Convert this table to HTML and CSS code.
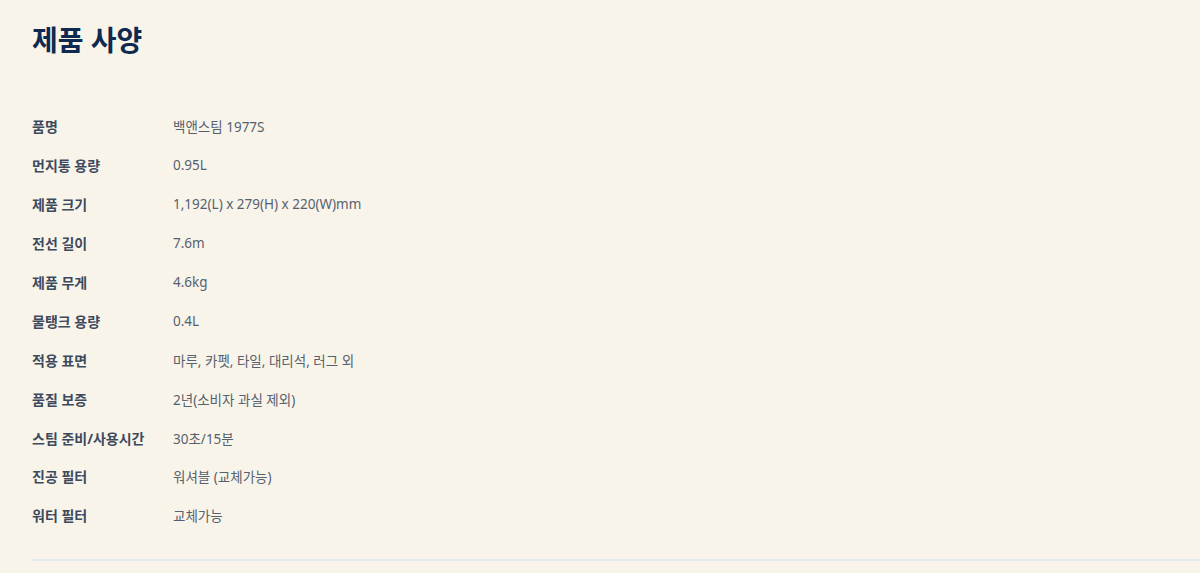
FILE: index.html
```html
<!DOCTYPE html>
<html lang="ko">
<head>
    <meta charset="UTF-8">
    <meta name="viewport" content="width=device-width, initial-scale=1.0">
    <title>제품 사양</title>
    <link rel="stylesheet" href="styles.css">
</head>
<body>

    <section class="spec-section">
        <h1>제품 사양</h1>

        <dl class="spec-list">
            <div class="spec-row"><dt>품명</dt><dd>백앤스팀 1977S</dd></div>
            <div class="spec-row"><dt>먼지통 용량</dt><dd>0.95L</dd></div>
            <div class="spec-row"><dt>제품 크기</dt><dd>1,192(L) x 279(H) x 220(W)mm</dd></div>
            <div class="spec-row"><dt>전선 길이</dt><dd>7.6m</dd></div>
            <div class="spec-row"><dt>제품 무게</dt><dd>4.6kg</dd></div>
            <div class="spec-row"><dt>물탱크 용량</dt><dd>0.4L</dd></div>
            <div class="spec-row"><dt>적용 표면</dt><dd>마루, 카펫, 타일, 대리석, 러그 외</dd></div>
            <div class="spec-row"><dt>품질 보증</dt><dd>2년(소비자 과실 제외)</dd></div>
            <div class="spec-row"><dt>스팀 준비/사용시간</dt><dd>30초/15분</dd></div>
            <div class="spec-row"><dt>진공 필터</dt><dd>워셔블 (교체가능)</dd></div>
            <div class="spec-row"><dt>워터 필터</dt><dd>교체가능</dd></div>
        </dl>

        <hr class="divider">
    </section>

</body>
</html>
```

FILE: styles.css
```css
body {
    font-family: "Noto Sans", "Noto Sans CJK KR", sans-serif;
    background: #f9f4ea;
    margin: 0;
    padding: 0;
}

.spec-section {
    padding: 21px 0 0 32px;
}

h1 {
    font-size: 28px;
    line-height: 38px;
    font-weight: 700;
    color: #0f2a50;
    margin: 0 0 48px;
}

.spec-list {
    margin: 0;
}

.spec-row {
    display: flex;
    height: 38.9px;
    align-items: center;
    font-size: 14px;
}

.spec-row dt {
    width: 141px;
    font-weight: 700;
    color: #3d4a5e;
}

.spec-row dd {
    margin: 0;
    font-size: 13.5px;
    color: #56616f;
}

.divider {
    border: none;
    border-top: 2px solid #e3eaf2;
    margin: 24px 0 0;
}
```
